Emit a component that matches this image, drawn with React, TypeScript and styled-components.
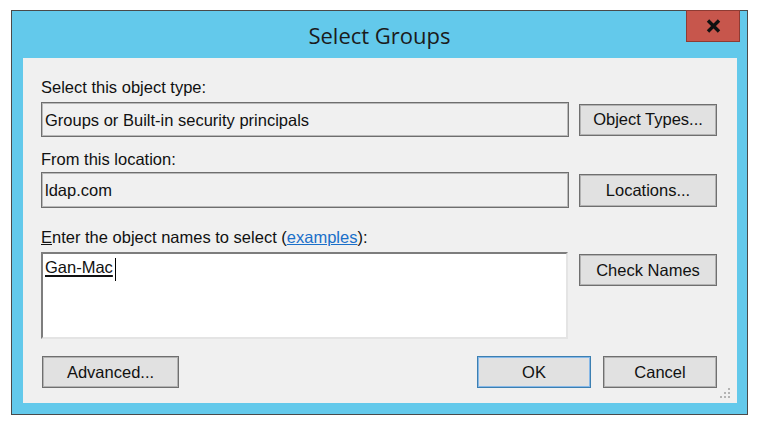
import React from 'react';
import styled, { createGlobalStyle } from 'styled-components';

const GlobalStyle = createGlobalStyle`
    html, body {
        margin: 0;
        padding: 0;
        background: #ffffff;
    }
    * {
        box-sizing: border-box;
    }
`

const Stage = styled.div`
    padding: 10px 0 0 11px;
`

const Window = styled.div`
    position: relative;
    width: 737px;
    height: 405px;
    border: 1px solid #4a4a4a;
    background-color: #63c9eb;
    display: flex;
    flex-direction: column;
`

const TitleBar = styled.div`
    height: 48px;
    display: flex;
    align-items: center;
    justify-content: center;
    font-family: "Segoe UI", "Open Sans", sans-serif;
    font-size: 22px;
    color: #1b1b1b;
`

const CloseButton = styled.button`
    position: absolute;
    top: -1px;
    right: 7px;
    width: 54px;
    height: 32px;
    padding: 0;
    border: 1px solid #8e3b33;
    background-color: #c7564c;
    display: flex;
    align-items: center;
    justify-content: center;
`

const Frame = styled.div`
    flex: 1;
    display: flex;
    padding: 0 10px 11px 11px;
`

const Client = styled.div`
    position: relative;
    flex: 1;
    background-color: #f0f0f0;
    padding: 19px 20px 15px 18px;
    font-family: "Liberation Sans", Arial, sans-serif;
    font-size: 16.5px;
    line-height: 20px;
    color: #111111;
`

const Label = styled.div<{ $gap: number }>`
    height: 20px;
    margin-bottom: ${props => props.$gap}px;
    white-space: nowrap;
`

const Key = styled.span`
    text-decoration: underline;
`

const Link = styled.a`
    color: #1a6fc9;
    text-decoration: underline;
`

const Row = styled.div<{ $gap: number; $align?: string }>`
    display: flex;
    align-items: ${props => props.$align ?? 'center'};
    gap: 10px;
    margin-bottom: ${props => props.$gap}px;
`

const Field = styled.div<{ $height: number }>`
    width: 528px;
    height: ${props => props.$height}px;
    display: flex;
    align-items: center;
    padding-left: 3px;
    border: 1px solid #6e6e6e;
    box-shadow: inset 0 0 0 1px #b9b9b9;
    white-space: nowrap;
`

const NameBox = styled.div`
    width: 527px;
    height: 87px;
    margin-right: 1px;
    background-color: #ffffff;
    border-style: solid;
    border-width: 2px;
    border-color: #7d7d7d #e4e4e4 #e4e4e4 #7d7d7d;
    padding: 3px 2px;
`

const ResolvedName = styled.span`
    display: inline-block;
    height: 23px;
    text-decoration: underline;
    text-decoration-thickness: 1.5px;
    text-underline-offset: 2px;
    border-right: 1.5px solid #000000;
    padding-right: 2px;
    line-height: 19px;
`

const Button = styled.button<{ $width: number; $height?: number; $default?: boolean }>`
    width: ${props => props.$width}px;
    height: ${props => props.$height ?? 32}px;
    padding: 0;
    flex-shrink: 0;
    background-color: #e1e1e1;
    border: 1px solid ${props => props.$default ? '#3c7fb1' : '#6f6f6f'};
    box-shadow: inset 0 0 0 1px ${props => props.$default ? '#86b8e8' : '#b3b3b3'};
    font-family: "Liberation Sans", Arial, sans-serif;
    font-size: 16.5px;
    color: #111111;
`

const CheckButton = styled(Button)`
    margin-top: 2px;
`

const Footer = styled.div`
    display: flex;
    align-items: center;
    padding-left: 1px;
`

const Spacer = styled.div`
    flex: 1;
`

const FooterGap = styled.div`
    width: 12px;
`

const Grip = styled.svg`
    position: absolute;
    right: 5px;
    bottom: 3px;
`

const CloseGlyph = () => (
    <svg width="15" height="14" viewBox="0 0 15 14">
        <path d="M2 1.5 L13 12.5 M13 1.5 L2 12.5" stroke="#111" strokeWidth="3.4" strokeLinecap="butt" />
    </svg>
);

const SizeGrip = () => (
    <Grip width="14" height="14" viewBox="0 0 14 14">
        {[[11, 3], [7, 7], [11, 7], [3, 11], [7, 11], [11, 11]].map(([x, y]) => (
            <rect key={`${x}-${y}`} x={x - 1} y={y - 1} width="2" height="2" fill="#b4b4b4" />
        ))}
    </Grip>
);

const App = () => {
    return (
        <Stage>
            <GlobalStyle />
            <Window>
                <TitleBar>Select Groups</TitleBar>
                <CloseButton aria-label="Close">
                    <CloseGlyph />
                </CloseButton>
                <Frame>
                    <Client>
                        <Label $gap={5}>Select this object type:</Label>
                        <Row $gap={12}>
                            <Field $height={35}>Groups or Built-in security principals</Field>
                            <Button $width={138}>Object Types...</Button>
                        </Row>
                        <Label $gap={3}>From this location:</Label>
                        <Row $gap={19}>
                            <Field $height={36}>ldap.com</Field>
                            <Button $width={138} $height={33}>Locations...</Button>
                        </Row>
                        <Label $gap={5}>
                            <Key>E</Key>nter the object names to select (<Link>examples</Link>):
                        </Label>
                        <Row $gap={17} $align="flex-start">
                            <NameBox>
                                <ResolvedName>Gan-Mac</ResolvedName>
                            </NameBox>
                            <CheckButton $width={138}>Check Names</CheckButton>
                        </Row>
                        <Footer>
                            <Button $width={137}>Advanced...</Button>
                            <Spacer />
                            <Button $width={114} $default>OK</Button>
                            <FooterGap />
                            <Button $width={114}>Cancel</Button>
                        </Footer>
                        <SizeGrip />
                    </Client>
                </Frame>
            </Window>
        </Stage>
    );
};

export default App;
